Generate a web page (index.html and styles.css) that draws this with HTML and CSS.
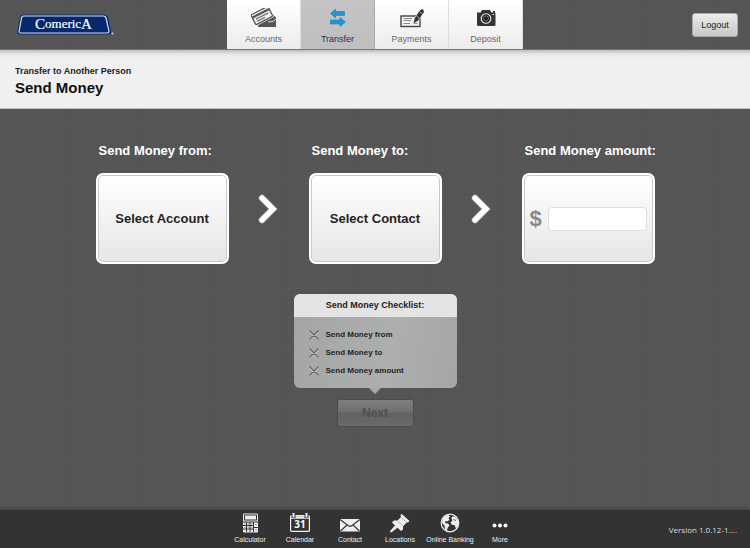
FILE: index.html
```
<!DOCTYPE html>
<html lang="en">
<head>
<meta charset="utf-8">
<meta name="viewport" content="width=device-width, initial-scale=1">
<title>Comerica - Send Money</title>
<link rel="stylesheet" href="styles.css">
</head>
<body>
<header class="topbar">
  <a class="brand" href="#" aria-label="Comerica">
    <svg width="98" height="22" viewBox="0 0 98 22">
      <path d="M6 .5H87Q90 .5 91 3L94 17Q94.500 20.500 91 20.500H3Q0 20.500 .5 17L3 3Q4 .5 6 .5Z" fill="#0b2a6b"/>
      <path d="M6.500 2H86.500Q88.500 2 89 4L92 17Q92 19 90.500 19H3.500Q2 19 2.200 17L4.500 4Q5 2 6.500 2Z" fill="#06296e" stroke="#d5def0" stroke-width="1.200"/>
      <text class="logo-text" x="18" y="14"><tspan class="logo-cap" dy="1">C</tspan><tspan dy="-1">omeric</tspan><tspan class="logo-cap" dy="1">A</tspan></text>
      <circle cx="95.500" cy="19.500" r="1" fill="#ddd"/>
    </svg>
  </a>
  <nav class="tabs">
    <a class="tab" href="#">
      <svg width="26" height="20" viewBox="0 0 26 20">
        <path d="M8 10L22 6.500 25 9.500V19H7Z" fill="#555"/>
        <path d="M17 14L22 13.500 25 11" fill="none" stroke="#ddd"/>
        <g transform="rotate(-27 10 8)">
          <rect x="1.500" y="2.500" width="19" height="11" rx="1" fill="#f3f3f3" stroke="#f6f6f6" stroke-width="2.500"/>
          <rect x="1.500" y="2.500" width="19" height="11" rx="1" fill="#f3f3f3" stroke="#555" stroke-width="1.300"/>
          <path d="M2 5.500H20" stroke="#555" stroke-width="2.200"/>
          <path d="M4 8.500H18M4 11H13" stroke="#777" stroke-width="1.300"/>
        </g>
      </svg>
      <span>Accounts</span>
    </a>
    <a class="tab active" href="#" aria-current="page">
      <svg width="26" height="20" viewBox="0 0 26 20">
        <path d="M5.500 5.500L10.500 1V3.500H19.500V7.500H10.500V10Z M20.500 14L15 9.500V12H5.500V16H15V18.500Z" fill="#1c96d8" stroke="#2878ae" stroke-width=".6"/>
      </svg>
      <span>Transfer</span>
    </a>
    <a class="tab" href="#">
      <svg width="26" height="20" viewBox="0 0 26 20">
        <rect x="2" y="8" width="19" height="10.500" fill="#f4f4f4" stroke="#444" stroke-width="1.400"/>
        <path d="M4.500 10.500H13M4.500 12.500H12M4.500 15.500H11M15 15.500H18.500" stroke="#888"/>
        <path d="M14 16L15.500 10 20.500 2.500 23 .8 25 2V4.500L19 13Z" fill="#333" stroke="#f4f4f4" stroke-width=".6"/>
        <path d="M17.500 8L20.500 10.500M20.500 3.500L23.500 6" stroke="#ddd" stroke-width=".7"/>
      </svg>
      <span>Payments</span>
    </a>
    <a class="tab" href="#">
      <svg width="26" height="20" viewBox="0 0 26 20">
        <path d="M4 4.500H7.500L9 2H17L18.500 4.500H20V3H22V4.500Q22.500 5 22.500 6V16.500Q22.500 18 21 18H5.500Q4 18 4 16.500Z" fill="#333"/>
        <circle cx="13" cy="10.500" r="4.800" fill="#222" stroke="#eee" stroke-width="1.100"/>
        <circle cx="13" cy="10.500" r="2.600" fill="#222" stroke="#999" stroke-width=".6"/>
        <circle cx="20.300" cy="6.500" r=".8" fill="#eee"/>
      </svg>
      <span>Deposit</span>
    </a>
  </nav>
  <button class="logout" type="button">Logout</button>
</header>

<div class="titlebar">
  <p>Transfer to Another Person</p>
  <h1>Send Money</h1>
</div>

<main>
  <div class="steps">
    <section class="step">
      <h2>Send Money from:</h2>
      <button class="card" type="button">Select Account</button>
    </section>
    <svg class="arrow" width="24" height="32" viewBox="0 0 24 32" aria-hidden="true">
      <path d="M5 5L16 16 5 27" fill="none" stroke="#858585" stroke-width="7" stroke-linecap="round"/>
      <path d="M5 5L16 16 5 27" fill="none" stroke="#fff" stroke-width="5.500" stroke-linecap="round"/>
    </svg>
    <section class="step">
      <h2>Send Money to:</h2>
      <button class="card" type="button">Select Contact</button>
    </section>
    <svg class="arrow" width="24" height="32" viewBox="0 0 24 32" aria-hidden="true">
      <path d="M5 5L16 16 5 27" fill="none" stroke="#858585" stroke-width="7" stroke-linecap="round"/>
      <path d="M5 5L16 16 5 27" fill="none" stroke="#fff" stroke-width="5.500" stroke-linecap="round"/>
    </svg>
    <section class="step">
      <h2><label for="amount">Send Money amount:</label></h2>
      <div class="card amount">
        <span class="dollar">$</span>
        <input id="amount" type="text" inputmode="decimal">
      </div>
    </section>
  </div>

  <section class="checklist">
    <h3>Send Money Checklist:</h3>
    <ul>
      <li><svg width="10" height="10" viewBox="0 0 10 10"><path d="M1 1.500L9 9.500M9 1.500L1 9.500" stroke="#d5d7d6" stroke-width="2"/><path d="M1 1L9 9M9 1L1 9" stroke="#666" stroke-width="1.500" stroke-linecap="round"/></svg>Send Money from</li>
      <li><svg width="10" height="10" viewBox="0 0 10 10"><path d="M1 1.500L9 9.500M9 1.500L1 9.500" stroke="#d5d7d6" stroke-width="2"/><path d="M1 1L9 9M9 1L1 9" stroke="#666" stroke-width="1.500" stroke-linecap="round"/></svg>Send Money to</li>
      <li><svg width="10" height="10" viewBox="0 0 10 10"><path d="M1 1.500L9 9.500M9 1.500L1 9.500" stroke="#d5d7d6" stroke-width="2"/><path d="M1 1L9 9M9 1L1 9" stroke="#666" stroke-width="1.500" stroke-linecap="round"/></svg>Send Money amount</li>
    </ul>
  </section>
  <button class="next" type="button" disabled>Next</button>
</main>

<footer class="dock">
  <nav class="links">
    <a href="#">
      <svg width="22" height="20" viewBox="0 0 22 20">
        <rect x="4" y=".5" width="15" height="19" rx="1" fill="#eee"/>
        <rect x="5.500" y="2" width="12" height="5" fill="#eee" stroke="#333"/>
        <path d="M4 9H19M4 12.500H14M4 16H14M7.500 9V19M11 9V19M14.500 9V19M15 14.500H19" stroke="#333"/>
        <path d="M5 10.800H6.500M8.500 10.800H10M12 10.800H13.500M5 14.300H6.500M8.500 14.300H10M12 14.300H13.500M16 11.500H18M16 17H18" stroke="#555" stroke-width=".6"/>
      </svg>
      <span>Calculator</span>
    </a>
    <a href="#">
      <svg width="22" height="20" viewBox="0 0 22 20">
        <rect x="1.600" y="2.600" width="18.800" height="15.800" rx="1" fill="#333" stroke="#eee" stroke-width="1.200"/>
        <path d="M2 4.500H20" stroke="#eee" stroke-width="2.500"/>
        <path d="M4.500 0V5M17.500 0V5" stroke="#333" stroke-width="4"/>
        <path d="M4.500 0V4.500M17.500 0V4.500" stroke="#eee" stroke-width="2"/>
        <text class="date" x="11" y="15" text-anchor="middle">31</text>
      </svg>
      <span>Calendar</span>
    </a>
    <a href="#">
      <svg width="22" height="20" viewBox="0 0 22 20">
        <rect x="1" y="6" width="20" height="12.500" fill="#eee"/>
        <path d="M1 6.500L9 12.500Q11 14 13 12.500L21 6.500M1.500 18L8 12M20.500 18L14 12" fill="none" stroke="#333" stroke-width="1.100"/>
      </svg>
      <span>Contact</span>
    </a>
    <a href="#">
      <svg width="22" height="20" viewBox="0 0 22 20">
        <path d="M12.500 .8L20.500 8 19 9.500 17.500 9.500 14 13.500V16.500L12 18 8.500 14.800 3 19 1 19.500 1.500 17.500 6 12.500 3 9.500 4.800 7.500H8.500L12 4 11.500 2.200Z" fill="#eee"/>
        <path d="M8.500 8L14 13M12 4.200L17.300 9.200" stroke="#999" stroke-width=".7"/>
      </svg>
      <span>Locations</span>
    </a>
    <a href="#">
      <svg width="22" height="20" viewBox="0 0 22 20">
        <circle cx="11" cy="10" r="8.800" fill="#333" stroke="#eee" stroke-width="1.200"/>
        <path d="M3.500 5.500Q6 2 9.500 2L11 3.500 9.500 5 10.500 7 8 8.500 6.500 8 6 10 9 10.500 10.500 12.500 8.500 15 8 18 6 16 5.500 12.500 3 10Z M13 3.500L16 3.500 19.500 8 19 13 17 15.500 15.500 12 13 12 11.500 9.500 13.500 7.500 12.500 5.500Z" fill="#eee"/>
        <path d="M14.500 6.500L17 7.500" stroke="#333" stroke-width=".8"/>
      </svg>
      <span>Online Banking</span>
    </a>
    <a href="#">
      <svg width="22" height="20" viewBox="0 0 22 20">
        <g fill="#fff"><circle cx="5.500" cy="12.500" r="2"/><circle cx="11" cy="12.500" r="2"/><circle cx="16.500" cy="12.500" r="2"/></g>
      </svg>
      <span>More</span>
    </a>
  </nav>
  <p class="version">Version 1.0.12-1....</p>
</footer>
</body>
</html>
```
FILE: styles.css
```
* {
  box-sizing: border-box;
}

body {
  margin: 0;
  min-height: 100vh;
  display: flex;
  flex-direction: column;
  font-family: "Liberation Sans", Arial, sans-serif;
  color: #222;
  background-color: #555;
  background-image:
    repeating-linear-gradient(0deg, rgba(255, 255, 255, .01) 0 1px, transparent 1px 3px, rgba(0, 0, 0, .015) 3px 4px, transparent 4px 7px),
    repeating-linear-gradient(90deg, rgba(255, 255, 255, .01) 0 1px, transparent 1px 4px, rgba(0, 0, 0, .015) 4px 5px, transparent 5px 9px);
}

h1, h2, h3, p, ul {
  margin: 0;
  padding: 0;
}

a {
  color: inherit;
  text-decoration: none;
}

button {
  font-family: inherit;
  color: inherit;
}

svg {
  display: block;
}

.topbar {
  display: grid;
  grid-template-columns: 1fr auto 1fr;
  align-items: center;
  height: 50px;
  padding: 0 12px 0 12px;
  border-bottom: 1px solid #777;
}

.brand {
  padding-left: 5px;
}

.logo-text {
  font-family: "Liberation Serif", serif;
  font-size: 13px;
  fill: #fff;
  stroke: #fff;
  stroke-width: .2px;
}

.logo-cap {
  font-size: 15px;
}

.tabs {
  display: flex;
  align-self: stretch;
}

.tab {
  display: flex;
  flex-direction: column;
  align-items: center;
  gap: 5px;
  width: 74px;
  padding-top: 8px;
  font-size: 9px;
  line-height: 12px;
  color: #666;
  background: linear-gradient(#fff, #ececec);
  border-right: 1px solid #ddd;
}

.tab.active {
  color: #17335f;
  background: linear-gradient(#c4c4c4, #bfbfbf);
  border-right-color: #aaa;
}

.logout {
  justify-self: end;
  width: 46px;
  height: 24px;
  padding: 0;
  border: 1px solid #aaa;
  border-radius: 3px;
  font-size: 9px;
  background: linear-gradient(#ececec, #c8c8c8);
}

.titlebar {
  height: 59px;
  padding: 15px 15px 0;
  background: linear-gradient(#bbb, #e6e6e6 4px, #f0f0f0 8px);
  border-bottom: 1px solid #bbb;
}

.titlebar p {
  font-size: 9px;
  font-weight: bold;
  line-height: 13px;
}

.titlebar h1 {
  font-size: 15px;
  line-height: 20px;
  color: #111;
}

main {
  flex: 1;
  display: flex;
  flex-direction: column;
  align-items: center;
  padding-top: 33px;
}

.steps {
  display: grid;
  grid-template-columns: 133px 80px 133px 80px 133px;
}

.step h2 {
  padding-left: 3px;
  margin-bottom: 13px;
  font-size: 13px;
  line-height: 18px;
  white-space: nowrap;
  color: #fff;
}

.arrow {
  align-self: end;
  justify-self: center;
  margin-bottom: 39px;
}

.card {
  display: flex;
  align-items: center;
  justify-content: center;
  width: 100%;
  height: 91px;
  padding: 0;
  border: 2px solid #fff;
  border-radius: 7px;
  font-size: 13px;
  font-weight: bold;
  background: linear-gradient(#fff, #e6e6e6);
  box-shadow: inset 0 0 0 1px #c8c8c8;
}

.amount {
  gap: 6px;
  padding: 0 6px;
}

.dollar {
  font-size: 22px;
  line-height: 24px;
  color: #888;
}

.amount input {
  flex: 1;
  min-width: 0;
  height: 24px;
  padding: 0 6px;
  border: 1px solid #ddd;
  border-radius: 4px;
  font: 13px "Liberation Sans", Arial, sans-serif;
  background: #fff;
}

.checklist {
  position: relative;
  width: 163px;
  margin-top: 30px;
  border-radius: 6px;
  font-size: 8px;
  background: linear-gradient(100deg, #a4a6a5, #adafae 60%, #a5a7a6);
}

.checklist::after {
  content: "";
  position: absolute;
  top: 100%;
  left: 50%;
  margin-left: -6px;
  border: 6px solid transparent;
  border-top-color: #a8aaa9;
  border-bottom: 0;
}

.checklist h3 {
  font-size: 9px;
  line-height: 23px;
  text-align: center;
  background: #e4e4e4;
  border-radius: 6px 6px 0 0;
}

.checklist ul {
  padding: 9px 15px 8px;
  list-style: none;
}

.checklist li {
  display: flex;
  align-items: center;
  gap: 7px;
  line-height: 18px;
  font-weight: bold;
}

.next {
  width: 77px;
  height: 28px;
  margin-top: 11px;
  padding: 0;
  border: 1px solid #4c4c4c;
  border-radius: 3px;
  font-size: 12px;
  font-weight: bold;
  color: #505050;
  background: linear-gradient(#808080, #6e6e6e 45%, #626262 50%, #6a6a6a);
}

.dock {
  display: grid;
  grid-template-columns: 1fr auto 1fr;
  align-items: center;
  height: 38px;
  padding: 0 13px;
  color: #eee;
  background: #333;
  box-shadow: 0 -2px 3px #444;
}

.links {
  grid-column: 2;
  display: flex;
}

.links a {
  display: flex;
  flex-direction: column;
  align-items: center;
  gap: 1px;
  width: 50px;
  font-size: 7px;
  line-height: 12px;
  white-space: nowrap;
}

.date {
  font-family: "Open Sans", sans-serif;
  font-size: 10px;
  font-weight: bold;
  fill: #fff;
}

.version {
  justify-self: end;
  font-family: "Open Sans", sans-serif;
  font-size: 8px;
  color: #ddd;
}
```
